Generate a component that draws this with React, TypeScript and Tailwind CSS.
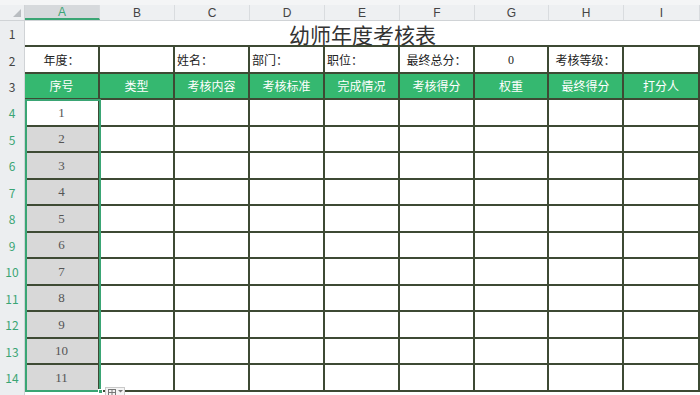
const cols = [
    { l: "A", w: "w-[75px]" },
    { l: "B", w: "w-[75px]" },
    { l: "C", w: "w-[75px]" },
    { l: "D", w: "w-[75px]" },
    { l: "E", w: "w-[75px]" },
    { l: "F", w: "w-[75px]" },
    { l: "G", w: "w-[74px]" },
    { l: "H", w: "w-[75px]" },
    { l: "I", w: "w-[76px]" },
]

const info = [
    { t: "年度：", a: "justify-center" },
    { t: "", a: "justify-center" },
    { t: "姓名：", a: "justify-start pl-[2px]" },
    { t: "部门：", a: "justify-start pl-[2px]" },
    { t: "职位：", a: "justify-start pl-[2px]" },
    { t: "最终总分：", a: "justify-center" },
    { t: "0", a: "justify-center font-['Liberation_Serif',serif]" },
    { t: "考核等级：", a: "justify-center" },
    { t: "", a: "justify-center" },
]

const heads = ["序号", "类型", "考核内容", "考核标准", "完成情况", "考核得分", "权重", "最终得分", "打分人"]

const nums = [1, 2, 3, 4, 5, 6, 7, 8, 9, 10, 11]

function RowNum({ n, green }: { n: number; green?: boolean }) {
    return <div className={`w-[25px] shrink-0 flex items-center justify-center bg-[#eceef0] border-r border-[#d0d3d6] text-[12px] ${green ? "text-[#3aa574]" : "text-[#444]"}`}>{n}</div>
}

export default function App() {
    return <div className="w-[700px] h-[395px] overflow-hidden bg-white relative font-['Noto_Sans_CJK_SC','Liberation_Sans',sans-serif]">
        {/* column letters */}
        <div className="h-[5px] bg-[#f4f5f6]" />
        <div className="flex h-[16px] bg-[#eef0f2] border-b border-[#d0d3d6] font-['Liberation_Sans',sans-serif] text-[12px] leading-none text-[#444]">
            <div className="w-[25px] shrink-0 relative border-r border-[#d0d3d6]">
                <div className="absolute right-[3px] bottom-[3px] w-0 h-0 border-l-[8px] border-l-transparent border-b-[8px] border-b-[#b9bdc1]" />
            </div>
            {cols.map((c, i) => (
                <div key={c.l} className={`${c.w} shrink-0 flex items-center justify-center border-r border-[#d9dcdf] ${i === 0 ? "bg-[#d6d9dc] text-[#3aa574] border-b-2 border-b-[#3aa574]" : ""}`}>{c.l}</div>
            ))}
        </div>

        {/* row 1 title */}
        <div className="flex h-[26px]">
            <RowNum n={1} />
            <div className="flex-1 flex items-center justify-center border-b-2 border-[#3e4a34] text-[21px] leading-[21px] text-[#333] pt-[2px]">幼师年度考核表</div>
        </div>

        {/* row 2 info */}
        <div className="flex h-[27px]">
            <RowNum n={2} />
            {cols.map((c, i) => (
                <div key={c.l} className={`${c.w} shrink-0 flex items-center border-r-2 border-b-2 border-[#3e4a34] text-[12px] text-[#222] ${info[i].a}`}>{info[i].t}</div>
            ))}
        </div>

        {/* row 3 green header */}
        <div className="flex h-[26px]">
            <RowNum n={3} />
            {cols.map((c, i) => (
                <div key={c.l} className={`${c.w} shrink-0 flex items-center justify-center bg-[#35b870] border-r-2 border-b-2 border-[#3e4a34] text-[12px] text-white`}>{heads[i]}</div>
            ))}
        </div>

        {/* data rows */}
        {nums.map((n, r) => (
            <div key={n} className="flex h-[26.5px]">
                <RowNum n={r + 4} green />
                {cols.map((c, i) => (
                    <div key={c.l} className={`${c.w} shrink-0 flex items-center justify-center border-r-2 border-b-2 border-[#3e4a34] ${i === 0 && r > 0 ? "bg-[#d8d8d8]" : "bg-white"} font-['Liberation_Serif',serif] text-[13px] text-[#555]`}>{i === 0 ? n : ""}</div>
                ))}
            </div>
        ))}

        <div className="flex h-[10px]">
            <div className="w-[25px] shrink-0 flex justify-center bg-[#eceef0] border-r border-[#d0d3d6] text-[12px] text-[#444] leading-[12px] pt-[2px]">15</div>
        </div>

        {/* selection of A4:A14 */}
        <div className="absolute left-[25px] top-[99px] w-[76px] h-[293px] border-2 border-[#3aa574] pointer-events-none" />
        <div className="absolute left-[98px] top-[389px] w-[5px] h-[5px] bg-[#3aa574] border border-white" />
        <div className="absolute left-[105px] top-[387px] w-[20px] h-[10px] bg-[#f4f4f4] border border-[#c9c9c9] flex items-start pl-[2px] pt-[1px] gap-[2px]">
            <svg width="8" height="7" viewBox="0 0 8 7"><rect x="0.5" y="0.5" width="7" height="6" fill="none" stroke="#777" /><path d="M4 0.5V6.5M0.5 3.5H7.5" stroke="#777" /></svg>
            <svg width="5" height="4" viewBox="0 0 5 4"><path d="M0 1L2.5 3.5L5 1" fill="#777" /></svg>
        </div>
    </div>
}
